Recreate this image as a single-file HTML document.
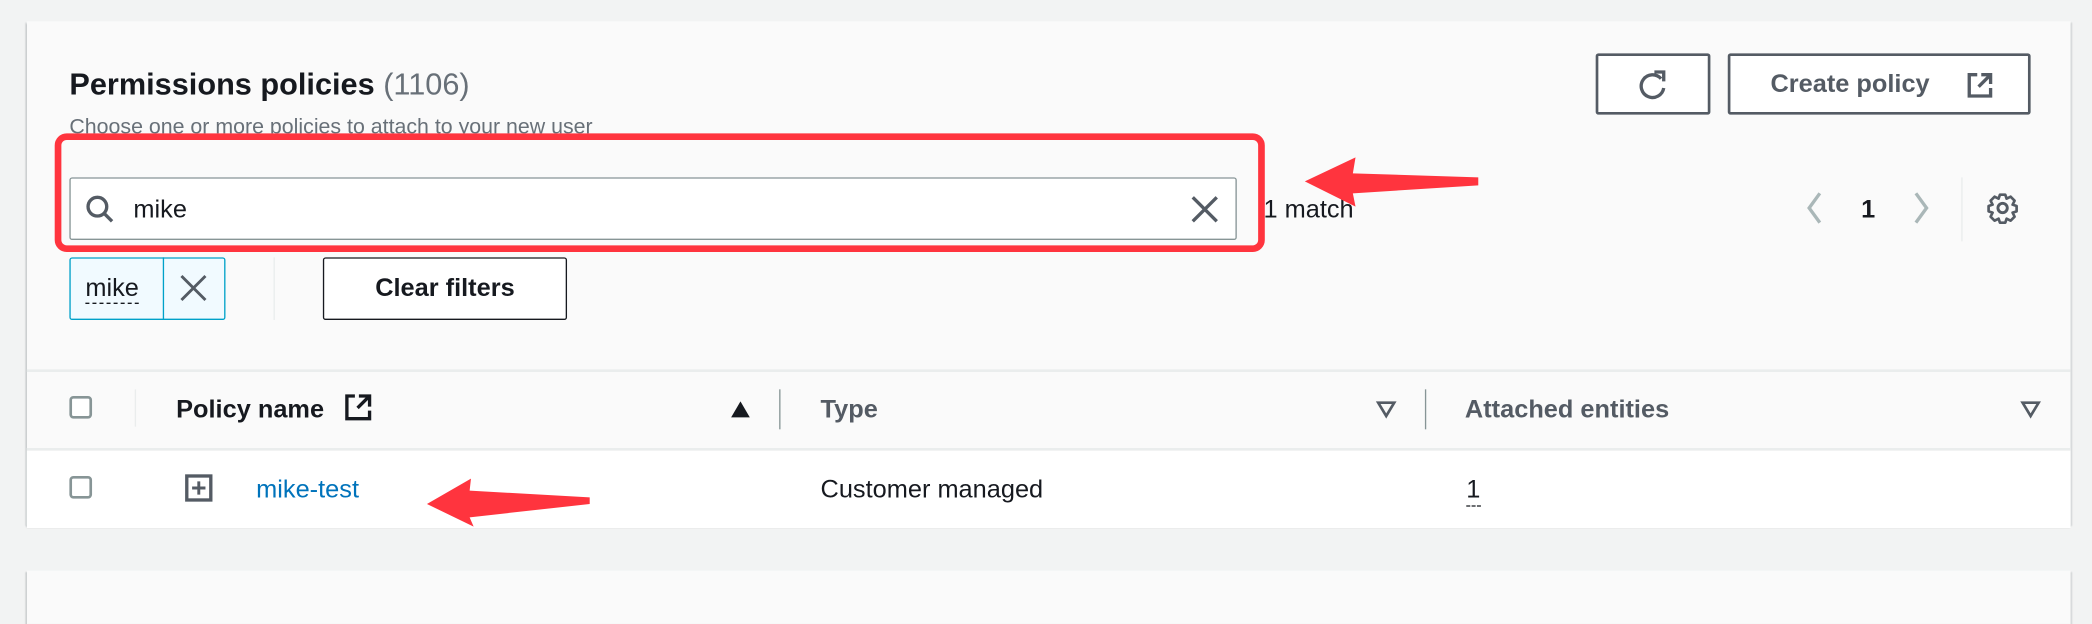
<!DOCTYPE html>
<html><head><meta charset="utf-8"><style>
html,body{margin:0;padding:0;background:#f2f3f3;width:2092px;height:612px;overflow:hidden}
#w{position:absolute;left:0;top:0;width:1568px;height:459px;transform:scale(1.33418,1.3333);transform-origin:0 0;font-family:"Liberation Sans",sans-serif;color:#16191f}
.a{position:absolute}
.card{background:#fafafa;box-shadow:0 1px 1px rgba(0,28,36,.3),1px 1px 1px rgba(0,28,36,.15),-1px 1px 1px rgba(0,28,36,.15)}
.btn{border:2px solid #545b64;border-radius:2px;box-sizing:border-box;background:#fff;color:#545b64;font-weight:bold;font-size:19px}
.cb{width:17px;height:17px;border:2px solid #879596;border-radius:3px;box-sizing:border-box;background:#fff}
.th{font-size:19px;font-weight:bold;color:#545b64}
</style></head><body><div id="w">
<div class="a card" style="left:20px;top:16px;width:1532px;height:378px;box-shadow:0 2px 1px rgba(0,28,36,.35),1px 1px 1px rgba(0,28,36,.15),-1px 1px 1px rgba(0,28,36,.15)"></div>
<div class="a" style="left:20px;top:277px;width:1532px;height:2px;background:#eaeded"></div>
<div class="a" style="left:20px;top:336px;width:1532px;height:58px;background:#fff;border-top:2px solid #eaeded"></div>
<div class="a card" style="left:20px;top:428px;width:1532px;height:40px"></div>

<div class="a" style="left:52px;top:50px;font-size:23px;font-weight:bold">Permissions policies <span style="font-weight:normal;color:#687078">(1106)</span></div>
<div class="a" style="left:52px;top:87px;font-size:16px;color:#687078;height:13px;overflow:hidden">Choose one or more policies to attach to your new user</div>

<div class="a btn" style="left:1196px;top:40px;width:86px;height:46px"><svg width="86" height="46" style="position:absolute;left:-2px;top:-2px"><path d="M49 19 A8.5 8.5 0 1 0 51 26" fill="none" stroke="#545b64" stroke-width="2.5"/><path d="M44 14 L51 14 L51 21" fill="none" stroke="#545b64" stroke-width="2.5"/></svg></div>
<div class="a btn" style="left:1295px;top:40px;width:227px;height:46px;line-height:44px;padding-left:30px">Create policy<svg width="22" height="22" style="position:absolute;left:176px;top:11px"><path d="M9 3 H3 V19 H19 V13" fill="none" stroke="#545b64" stroke-width="2.5"/><path d="M12 3 H19 V10 M19 3 L10 12" fill="none" stroke="#545b64" stroke-width="2.5"/></svg></div>

<div class="a" style="left:52px;top:133px;width:875px;height:47px;background:#fff;border:1px solid #879596;box-sizing:border-box;border-radius:2px"></div>
<svg class="a" style="left:62px;top:144px" width="26" height="26"><circle cx="11" cy="11" r="7" fill="none" stroke="#545b64" stroke-width="2.5"/><path d="M16 16 L22 22" stroke="#545b64" stroke-width="2.5"/></svg>
<div class="a" style="left:100px;top:147px;font-size:19px">mike</div>
<svg class="a" style="left:891px;top:145px" width="24" height="24"><path d="M3 3 L21 21 M21 3 L3 21" stroke="#545b64" stroke-width="2.5"/></svg>
<div class="a" style="left:41px;top:100px;width:907px;height:89px;border:5px solid #ff343e;border-radius:9px;box-sizing:border-box"></div>
<div class="a" style="left:947px;top:147px;font-size:19px">1 match</div>
<svg class="a" style="left:0;top:0" width="1568" height="459"><polygon points="978,136 1016,118 1014,130 1108,133 1108,139 1014,145 1016,155" fill="#ff343e"/><polygon points="320,378 353,359 352,368 442,373 442,378 352,388 355,395" fill="#ff343e"/></svg>

<svg class="a" style="left:1348px;top:142px" width="120" height="30"><path d="M16 3 L8 14 L16 25" fill="none" stroke="#aab7b8" stroke-width="2.5"/><path d="M88 3 L96 14 L88 25" fill="none" stroke="#aab7b8" stroke-width="2.5"/></svg>
<div class="a" style="left:1395px;top:147px;font-size:19px;font-weight:bold">1</div>
<div class="a" style="left:1470px;top:133px;width:1px;height:48px;background:#eaeded"></div>
<svg class="a" style="left:1489px;top:144px" width="26" height="26"><circle cx="12" cy="12" r="3.5" fill="none" stroke="#545b64" stroke-width="2.2"/><path d="M10 2h4l1 3 3 -1.5 3 3 -1.5 3 3 1v4l-3 1 1.5 3-3 3-3-1.5-1 3h-4l-1-3-3 1.5-3-3 1.5-3-3-1v-4l3-1-1.5-3 3-3 3 1.5z" fill="none" stroke="#545b64" stroke-width="2" stroke-linejoin="round"/></svg>

<div class="a" style="left:52px;top:193px;width:117px;height:47px;background:#f1faff;border:1px solid #00a1c9;box-sizing:border-box;border-radius:2px"></div>
<div class="a" style="left:122px;top:193px;width:1px;height:47px;background:#00a1c9"></div>
<div class="a" style="left:64px;top:207px;font-size:19px;border-bottom:1px dashed #16191f;line-height:20px">mike</div>
<svg class="a" style="left:134px;top:205px" width="22" height="22"><path d="M2 2 L20 20 M20 2 L2 20" stroke="#545b64" stroke-width="2.2"/></svg>
<div class="a" style="left:205px;top:193px;width:1px;height:47px;background:#eaeded"></div>
<div class="a btn" style="left:242px;top:193px;width:183px;height:47px;line-height:46px;text-align:center;color:#16191f;border-color:#16191f;border-width:1.5px">Clear filters</div>

<div class="a cb" style="left:52px;top:297px"></div>
<div class="a" style="left:101px;top:292px;width:1px;height:28px;background:#eaeded"></div>
<div class="a th" style="left:132px;top:297px;color:#16191f">Policy name</div>
<svg class="a" style="left:258px;top:295px" width="22" height="22"><path d="M8 2 H2 V19 H19 V13" fill="none" stroke="#16191f" stroke-width="2.5"/><path d="M11 2 H19 V10 M19 2 L10 11" fill="none" stroke="#16191f" stroke-width="2.5"/></svg>
<svg class="a" style="left:546px;top:299px" width="18" height="16"><polygon points="9,2 16,14 2,14" fill="#16191f"/></svg>
<div class="a" style="left:584px;top:292px;width:1px;height:30px;background:#879596"></div>
<div class="a th" style="left:615px;top:297px">Type</div>
<svg class="a" style="left:1030px;top:299px" width="18" height="16"><polygon points="3,3 15,3 9,13" fill="none" stroke="#545b64" stroke-width="2"/></svg>
<div class="a" style="left:1068px;top:292px;width:1px;height:30px;background:#879596"></div>
<div class="a th" style="left:1098px;top:297px">Attached entities</div>
<svg class="a" style="left:1513px;top:299px" width="18" height="16"><polygon points="3,3 15,3 9,13" fill="none" stroke="#545b64" stroke-width="2"/></svg>

<div class="a cb" style="left:52px;top:357px"></div>
<svg class="a" style="left:138px;top:355px" width="22" height="22"><rect x="2" y="2" width="18" height="18" fill="none" stroke="#545b64" stroke-width="2.5"/><path d="M11 6 V16 M6 11 H16" stroke="#545b64" stroke-width="2.2"/></svg>
<div class="a" style="left:192px;top:357px;font-size:19px;color:#0073bb">mike-test</div>
<div class="a" style="left:615px;top:357px;font-size:19px">Customer managed</div>
<div class="a" style="left:1099px;top:357px;font-size:19px;border-bottom:1px dashed #16191f;line-height:22px">1</div>
</div></body></html>
